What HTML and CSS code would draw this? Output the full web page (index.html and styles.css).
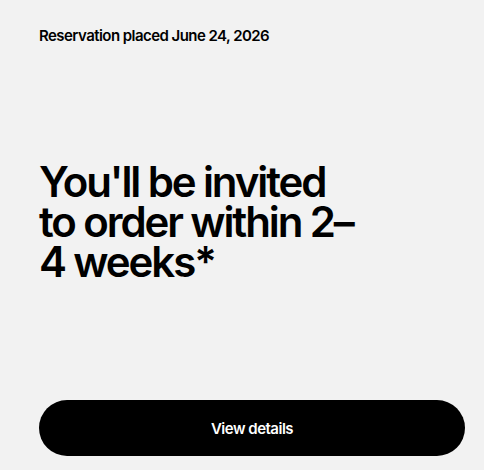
FILE: index.html
```html
<!DOCTYPE html>
<html lang="en">
<head>
<meta charset="utf-8">
<title>Reservation</title>
<link rel="stylesheet" href="styles.css">
</head>
<body>
<main class="card">
  <p class="meta">Reservation placed June 24, 2026</p>
  <h1 class="headline">You'll be invited<br>to order within 2–<br>4 weeks*</h1>
  <button class="cta" type="button">View details</button>
</main>
</body>
</html>
```

FILE: styles.css
```css
html, body {
  margin: 0;
  padding: 0;
  background: #f2f2f2;
}

.card {
  box-sizing: border-box;
  height: 470px;
  padding: 27px 19px 14px 39px;
  display: flex;
  flex-direction: column;
  font-family: Inter, "Noto Sans", sans-serif;
  color: #000;
}

.meta {
  margin: 0;
  font-size: 15px;
  line-height: 18px;
  font-weight: 600;
  letter-spacing: -0.55px;
}

.headline {
  margin: 117px 0 0;
  font-size: 42px;
  line-height: 40px;
  font-weight: 600;
  letter-spacing: -2.1px;
}

.cta {
  margin-top: auto;
  height: 56px;
  border: 0;
  border-radius: 28px;
  background: #000;
  color: #fff;
  font-family: inherit;
  font-size: 15px;
  font-weight: 600;
  letter-spacing: -0.5px;
  cursor: pointer;
}
```
